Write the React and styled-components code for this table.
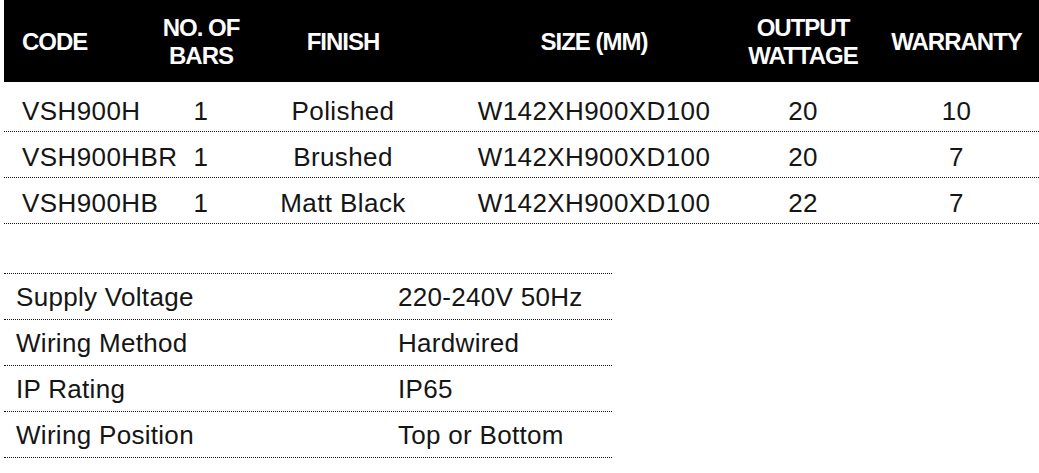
import styled, { createGlobalStyle } from 'styled-components';

const GlobalStyle = createGlobalStyle`
	html, body {
		margin: 0;
		padding: 0;
		background: #fff;
		overflow: hidden;
	}
`;

const columns = [
	{ width: 156, align: 'left', pad: 18 },
	{ width: 82, align: 'center', pad: 0 },
	{ width: 202, align: 'center', pad: 0 },
	{ width: 300, align: 'center', pad: 0 },
	{ width: 118, align: 'center', pad: 0 },
	{ width: 177, align: 'center', pad: 12 },
];

const gridColumns = columns.map((c) => `${c.width}px`).join(' ');

const Page = styled.div`
	padding-left: 4px;
	font-family: 'Liberation Sans', Arial, sans-serif;
	color: #151515;
`;

const SpecTable = styled.div`
	width: 1035px;
`;

const HeadRow = styled.div`
	display: grid;
	grid-template-columns: ${gridColumns};
	align-items: center;
	height: 82px;
	margin-bottom: 4px;
	background: #000;
	color: #fdfdfd;
`;

const HeadCell = styled.div`
	text-align: ${(p) => p.$align};
	padding-left: ${(p) => p.$pad}px;
	font-size: 24px;
	font-weight: 700;
	letter-spacing: -1px;
	line-height: 28px;
	padding-top: 1px;
`;

const BodyRow = styled.div`
	display: grid;
	grid-template-columns: ${gridColumns};
	box-sizing: border-box;
	height: 46px;
	padding-top: 5px;
	border-bottom: 1px dotted #111;
`;

const BodyCell = styled.div`
	text-align: ${(p) => p.$align};
	padding-left: ${(p) => p.$pad}px;
	font-size: 26px;
	letter-spacing: 0.4px;
	line-height: 40px;
	white-space: nowrap;
`;

const InfoTable = styled.div`
	width: 608px;
	margin-top: 49px;
	border-top: 1px dotted #111;
`;

const InfoRow = styled.div`
	display: grid;
	grid-template-columns: 394px 1fr;
	align-items: center;
	box-sizing: border-box;
	height: 46px;
	border-bottom: 1px dotted #111;
	font-size: 26px;
	letter-spacing: 0.3px;
	line-height: 30px;
`;

const InfoLabel = styled.div`
	padding-left: 12px;
`;

const InfoValue = styled.div``;

const headers = [
	['CODE'],
	['NO. OF', 'BARS'],
	['FINISH'],
	['SIZE (MM)'],
	['OUTPUT', 'WATTAGE'],
	['WARRANTY'],
];

const products = [
	['VSH900H', '1', 'Polished', 'W142XH900XD100', '20', '10'],
	['VSH900HBR', '1', 'Brushed', 'W142XH900XD100', '20', '7'],
	['VSH900HB', '1', 'Matt Black', 'W142XH900XD100', '22', '7'],
];

const specs = [
	['Supply Voltage', '220-240V 50Hz'],
	['Wiring Method', 'Hardwired'],
	['IP Rating', 'IP65'],
	['Wiring Position', 'Top or Bottom'],
];

export default function App() {
	return (
		<Page>
			<GlobalStyle />
			<SpecTable>
				<HeadRow>
					{headers.map((lines, i) => (
						<HeadCell key={i} $align={columns[i].align} $pad={columns[i].pad}>
							{lines.map((line, j) => (
								<div key={j}>{line}</div>
							))}
						</HeadCell>
					))}
				</HeadRow>
				{products.map((row) => (
					<BodyRow key={row[0]}>
						{row.map((value, i) => (
							<BodyCell key={i} $align={columns[i].align} $pad={columns[i].pad}>
								{value}
							</BodyCell>
						))}
					</BodyRow>
				))}
			</SpecTable>
			<InfoTable>
				{specs.map(([label, value]) => (
					<InfoRow key={label}>
						<InfoLabel>{label}</InfoLabel>
						<InfoValue>{value}</InfoValue>
					</InfoRow>
				))}
			</InfoTable>
		</Page>
	);
}
